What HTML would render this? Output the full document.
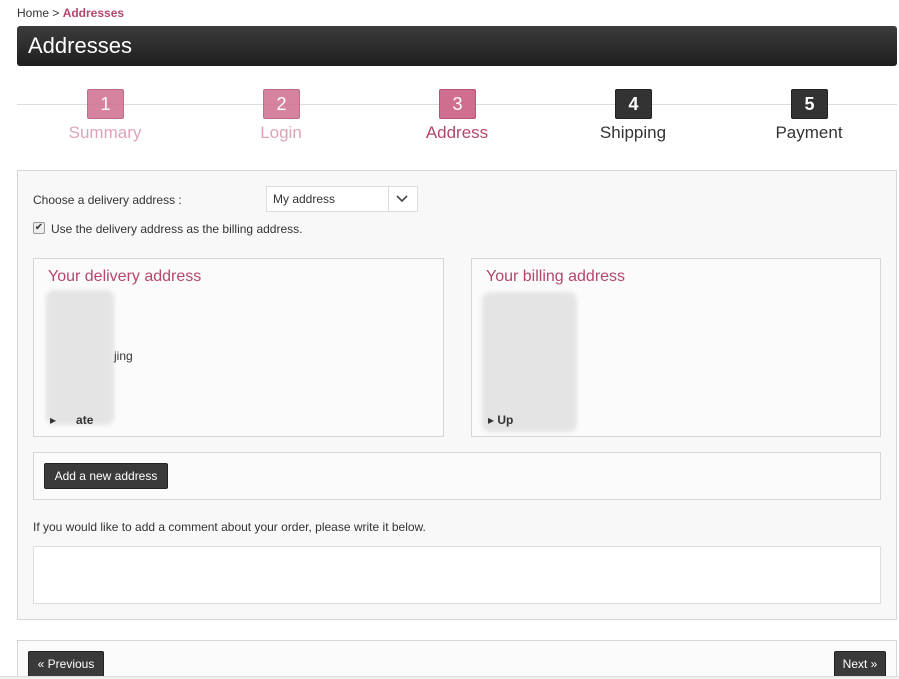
<!DOCTYPE html>
<html><head><meta charset="utf-8"><style>
*{box-sizing:border-box;margin:0;padding:0}
html,body{width:899px;height:679px;overflow:hidden}
body{background:#fff;font-family:"Liberation Sans",Arial,sans-serif;color:#333;position:relative}
.a{position:absolute}
.step{position:absolute;top:89px;width:37px;height:30px;border-radius:2px;color:#fff;font-size:18px;text-align:center;line-height:29px}
.p{background:#cf6e8f;border:1px solid #b85377}
.d{background:#333;border:1px solid #222;color:#fff;font-weight:bold}
.lbl{position:absolute;top:123px;width:160px;text-align:center;font-size:17px}
.box{position:absolute;background:#fbfbfb;border:1px solid #d6d6d6}
.btn{position:absolute;background:#3a3a3a;color:#fff;font-size:12px;border:1px solid #222;border-radius:2px;text-align:center}
.blur{position:absolute;background:#e4e4e4;border-radius:8px;filter:blur(2px)}
</style></head><body>
<div class="a" style="left:17px;top:6px;font-size:12px">Home &gt; <b style="color:#b4476b">Addresses</b></div>
<div class="a" style="left:17px;top:26px;width:880px;height:40px;border-radius:3px;background:linear-gradient(#3c3c3c,#1e1e1e);color:#fff;font-size:22px;padding:7px 11px">Addresses</div>
<div class="a" style="left:17px;top:104px;width:880px;height:1px;background:#ddd"></div>
<div class="step p" style="left:87px;opacity:.85">1</div>
<div class="step p" style="left:263px;opacity:.85">2</div>
<div class="step p" style="left:439px">3</div>
<div class="step d" style="left:615px">4</div>
<div class="step d" style="left:791px">5</div>
<div class="lbl" style="left:25px;color:#dea3b7">Summary</div>
<div class="lbl" style="left:201px;color:#dea3b7">Login</div>
<div class="lbl" style="left:377px;color:#b4476b">Address</div>
<div class="lbl" style="left:553px;color:#333">Shipping</div>
<div class="lbl" style="left:729px;color:#333">Payment</div>

<div class="box" style="left:17px;top:170px;width:880px;height:450px;background:#f8f8f8"></div>
<div class="a" style="left:33px;top:193px;font-size:12px">Choose a delivery address :</div>
<div class="a" style="left:266px;top:186px;width:152px;height:26px;background:#fff;border:1px solid #ddd;font-size:12px;padding:5px 6px">My address
<div class="a" style="left:121px;top:0;width:1px;height:24px;background:#ddd"></div>
<svg class="a" style="left:128px;top:7px" width="14" height="10"><path d="M2 2l5 5 5-5" stroke="#444" stroke-width="1.6" fill="none"/></svg></div>
<div class="a" style="left:33px;top:222px;width:12px;height:12px;border:1px solid #999;border-radius:2px;background:#eee;font-size:10px;line-height:10px;text-align:center">✔</div>
<div class="a" style="left:51px;top:222px;font-size:12px">Use the delivery address as the billing address.</div>

<div class="box" style="left:33px;top:258px;width:411px;height:179px"></div>
<div class="a" style="left:48px;top:268px;font-size:16px;color:#b4476b">Your delivery address</div>
<div class="blur" style="left:46px;top:290px;width:68px;height:135px"></div>
<div class="a" style="left:114px;top:349px;font-size:12px">jing</div>
<div class="a" style="left:50px;top:413px;font-size:12px">▸ <b>&nbsp;&nbsp;&nbsp;&nbsp;&nbsp;ate</b></div>

<div class="box" style="left:471px;top:258px;width:410px;height:179px"></div>
<div class="a" style="left:486px;top:268px;font-size:16px;color:#b4476b">Your billing address</div>
<div class="blur" style="left:482px;top:292px;width:95px;height:140px"></div>
<div class="a" style="left:488px;top:413px;font-size:12px">▸ <b>Up</b></div>

<div class="box" style="left:33px;top:452px;width:848px;height:48px"></div>
<div class="btn" style="left:44px;top:463px;width:124px;height:26px;line-height:24px">Add a new address</div>
<div class="a" style="left:33px;top:520px;font-size:12px">If you would like to add a comment about your order, please write it below.</div>
<div class="a" style="left:33px;top:546px;width:848px;height:58px;background:#fff;border:1px solid #ddd"></div>

<div class="box" style="left:17px;top:640px;width:880px;height:50px"></div>
<div class="btn" style="left:28px;top:651px;width:76px;height:28px;line-height:25px">« Previous</div>
<div class="btn" style="left:834px;top:651px;width:52px;height:28px;line-height:25px">Next »</div>
<div class="a" style="left:0;top:676px;width:899px;height:3px;background:#f0f0f0;border-top:1px solid #ddd"></div>
</body></html>
